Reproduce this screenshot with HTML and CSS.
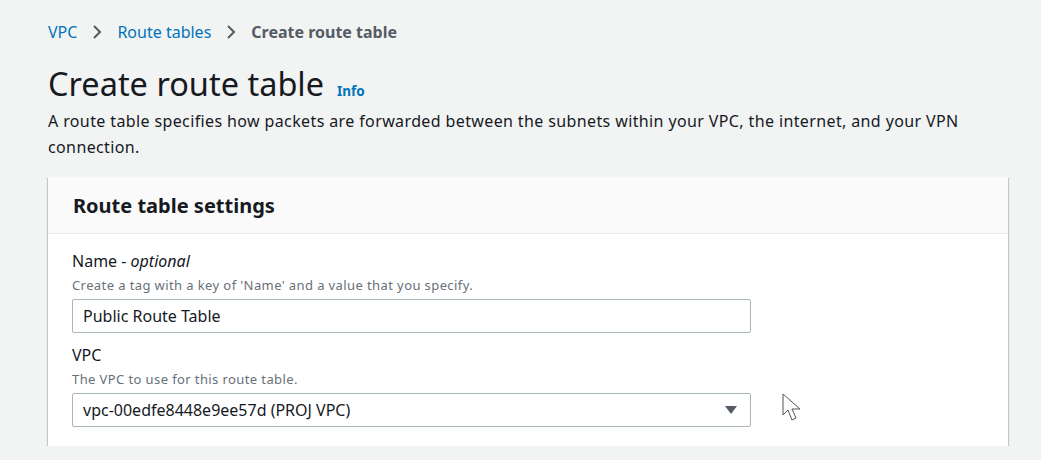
FILE: index.html
```html
<!DOCTYPE html>
<html>
<head>
<meta charset="utf-8">
<link rel="stylesheet" href="styles.css">
</head>
<body>
<div class="page">
  <nav class="crumbs">
    <a class="crumb-link">VPC</a>
    <svg class="chev" width="12" height="16" viewBox="0 0 12 16"><path d="M3 2 L9 8 L3 14" fill="none" stroke="#545b64" stroke-width="2"/></svg>
    <a class="crumb-link">Route tables</a>
    <svg class="chev" width="12" height="16" viewBox="0 0 12 16"><path d="M3 2 L9 8 L3 14" fill="none" stroke="#545b64" stroke-width="2"/></svg>
    <span class="crumb-current">Create route table</span>
  </nav>
  <div class="title-row">
    <h1 class="title">Create route table</h1>
    <a class="info">Info</a>
  </div>
  <p class="desc">A route table specifies how packets are forwarded between the subnets within your VPC, the internet, and your VPN connection.</p>
  <section class="card">
    <div class="card-head"><h2 class="card-title">Route table settings</h2></div>
    <div class="card-body">
      <div class="field">
        <div class="label">Name - <i>optional</i></div>
        <div class="hint">Create a tag with a key of 'Name' and a value that you specify.</div>
        <div class="input">Public Route Table</div>
      </div>
      <div class="field">
        <div class="label">VPC</div>
        <div class="hint">The VPC to use for this route table.</div>
        <div class="select-row">
          <div class="input select">
            <span>vpc-00edfe8448e9ee57d (PROJ VPC)</span>
            <svg class="caret" width="12" height="9" viewBox="0 0 12 9"><path d="M0 0 H12 L6 8 Z" fill="#545b64"/></svg>
          </div>
          <svg class="cursor" width="20" height="30" viewBox="0 0 20 30"><path d="M1 1 L1 22 L6 17 L10 27 L14 25 L10 16 L18 16 Z" fill="#fff" stroke="#555" stroke-width="1"/></svg>
        </div>
      </div>
    </div>
  </section>
</div>
</body>
</html>
```

FILE: styles.css
```css
html, body {
  margin: 0;
  padding: 0;
  background: #f2f3f3;
  font-family: "Noto Sans", "Open Sans", sans-serif;
  color: #16191f;
}
.page {
  padding: 21px 33px 0 48px;
}
.crumbs {
  display: flex;
  align-items: center;
  gap: 14px;
  font-size: 16px;
  line-height: 22px;
  height: 22px;
}
.crumb-link {
  color: #0073bb;
}
.crumb-current {
  color: #545b64;
  font-weight: 700;
}
.chev {
  display: block;
}
.title-row {
  display: flex;
  align-items: baseline;
  gap: 13px;
  margin-top: 17px;
}
.title {
  margin: 0;
  font-size: 32.5px;
  font-weight: 400;
  line-height: 48px;
}
.info {
  color: #0073bb;
  font-weight: 700;
  font-size: 13.5px;
}
.desc {
  margin: 0;
  font-size: 16px;
  line-height: 26px;
  letter-spacing: 0.38px;
  color: #16191f;
  max-width: 960px;
}
.card {
  margin-top: 17px;
  width: 960px;
  background: #fff;
  box-shadow: 0 1px 1px 0 rgba(0,28,36,0.3), 1px 1px 1px 0 rgba(0,28,36,0.15), -1px 1px 1px 0 rgba(0,28,36,0.15);
}
.card-head {
  background: #fafafa;
  border-bottom: 1px solid #eaeded;
  height: 56px;
  display: flex;
  align-items: center;
  padding: 0 25px;
}
.card-title {
  margin: 0;
  font-size: 20px;
  font-weight: 700;
}
.card-body {
  padding: 15px 24px 19px;
}
.field + .field {
  margin-top: 10px;
}
.label {
  font-size: 16px;
  line-height: 24px;
}
.hint {
  margin-top: 2px;
  font-size: 13px;
  line-height: 20px;
  letter-spacing: 0.4px;
  color: #687078;
}
.input {
  margin-top: 4px;
  width: 679px;
  height: 34px;
  box-sizing: border-box;
  border: 1px solid #aab7b8;
  border-radius: 2px;
  padding: 0 10px;
  display: flex;
  align-items: center;
  font-size: 16px;
}
.select-row {
  display: flex;
  align-items: flex-start;
  gap: 31px;
}
.select {
  justify-content: space-between;
  padding-right: 13px;
}
.caret {
  display: block;
}
.cursor {
  margin-top: 4px;
  display: block;
}
```
